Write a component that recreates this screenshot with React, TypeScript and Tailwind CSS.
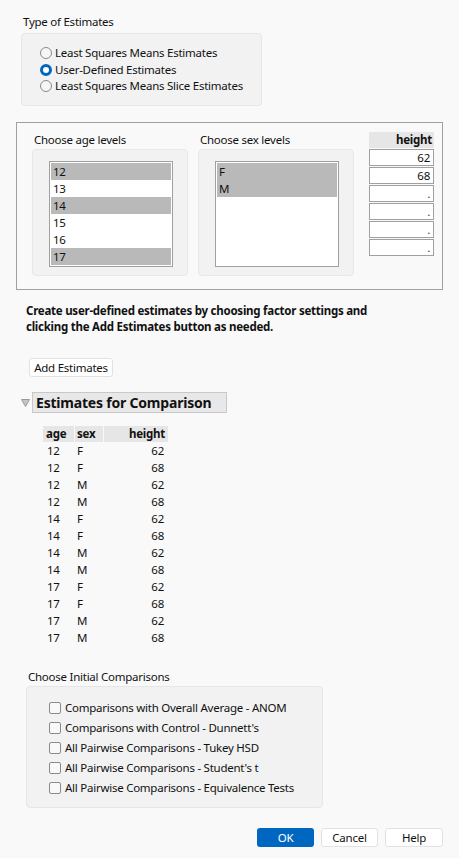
import React from "react";

const ages = ["12", "13", "14", "15", "16", "17"];
const ageSelected = ["12", "14", "17"];

const rows: [string, string, string][] = [
  ["12", "F", "62"],
  ["12", "F", "68"],
  ["12", "M", "62"],
  ["12", "M", "68"],
  ["14", "F", "62"],
  ["14", "F", "68"],
  ["14", "M", "62"],
  ["14", "M", "68"],
  ["17", "F", "62"],
  ["17", "F", "68"],
  ["17", "M", "62"],
  ["17", "M", "68"],
];

const comparisons = [
  "Comparisons with Overall Average - ANOM",
  "Comparisons with Control - Dunnett's",
  "All Pairwise Comparisons - Tukey HSD",
  "All Pairwise Comparisons - Student's t",
  "All Pairwise Comparisons - Equivalence Tests",
];

function Radio({ checked, label }: { checked?: boolean; label: string }) {
  return (
    <div className="flex h-[16.5px] items-center gap-[3px]">
      {checked ? (
        <span className="h-[12px] w-[12px] rounded-full border-[3.5px] border-[#0067c0] bg-white" />
      ) : (
        <span className="h-[12px] w-[12px] rounded-full border border-[#8a8a8a] bg-[#f6f6f6]" />
      )}
      <span>{label}</span>
    </div>
  );
}

function ListBox({ items, selected }: { items: string[]; selected: string[] }) {
  return (
    <div className="ml-[16px] mt-[11px] h-[106px] w-[124px] border border-[#a0a0a0] bg-white p-px">
      {items.map((it) => (
        <div
          key={it}
          className={`h-[17px] pl-[2px] leading-[17px] ${selected.includes(it) ? "bg-[#b9b9b9]" : ""}`}
        >
          {it}
        </div>
      ))}
    </div>
  );
}

export default function App() {
  return (
    <div className="h-[858px] w-[459px] overflow-hidden bg-[#f9f9f9] font-['Noto_Sans',sans-serif] text-[11.5px] leading-[16px] tracking-[-0.25px] text-[#111]">
      <div className="ml-[23px] pt-[14px]">Type of Estimates</div>
      <div className="ml-[21px] mt-[3px] h-[73px] w-[241px] rounded-[4px] border border-[#e6e6e6] bg-[#f2f2f2] pl-[18px] pt-[11px]">
        <Radio label="Least Squares Means Estimates" />
        <Radio checked label="User-Defined Estimates" />
        <Radio label="Least Squares Means Slice Estimates" />
      </div>

      <div className="ml-[16px] mt-[16px] flex h-[168px] w-[427px] border border-[#a0a0a0] pl-[15px] pt-[9px]">
        <div className="w-[156px]">
          <div className="h-[16px] pl-[2px]">Choose age levels</div>
          <div className="mt-px h-[127px] rounded-[4px] border border-[#e8e8e8] bg-[#f2f2f2]">
            <ListBox items={ages} selected={ageSelected} />
          </div>
        </div>
        <div className="ml-[10px] w-[156px]">
          <div className="h-[16px] pl-[2px]">Choose sex levels</div>
          <div className="mt-px h-[127px] rounded-[4px] border border-[#e8e8e8] bg-[#f2f2f2]">
            <ListBox items={["F", "M"]} selected={["F", "M"]} />
          </div>
        </div>
        <div className="ml-[15px] w-[65px]">
          <div className="h-[16px] bg-[#e6e6e6] pr-[2px] text-right font-bold">height</div>
          <div className="mt-px flex flex-col gap-px">
            {["62", "68", ".", ".", ".", "."].map((v, i) => (
              <div
                key={i}
                className={`h-[17px] border border-[#a0a0a0] bg-white pr-[3px] text-right leading-[15px] ${v === "." ? "text-[#2a2ab0]" : ""}`}
              >
                {v}
              </div>
            ))}
          </div>
        </div>
      </div>

      <div className="ml-[26px] mt-[13px] font-bold">
        Create user-defined estimates by choosing factor settings and
        <br />
        clicking the Add Estimates button as needed.
      </div>

      <div className="ml-[29px] mt-[23px] flex h-[19px] w-[84px] items-center justify-center rounded-[3px] border border-[#e2e2e2] bg-white">
        Add Estimates
      </div>

      <div className="mt-[15px] flex items-center pl-[21px]">
        <svg width="9" height="8" viewBox="0 0 9 8">
          <path d="M0.5 0.5 H8.5 L4.5 7.5 Z" fill="#c4c4c4" stroke="#9a9a9a" strokeWidth="1" />
        </svg>
        <div className="ml-[2px] flex h-[21px] w-[195px] items-center border border-[#c8c8c8] bg-[#e8e8e8] pl-[3px] text-[14px] font-bold tracking-[-0.2px]">
          Estimates for Comparison
        </div>
      </div>

      <div className="ml-[43px] mt-[13px] w-[125px]">
        <div className="flex h-[16px] gap-px font-bold">
          <div className="w-[31px] bg-[#e6e6e6] pl-[3px]">age</div>
          <div className="w-[28px] bg-[#e6e6e6] pl-[2px]">sex</div>
          <div className="w-[64px] bg-[#e6e6e6] pr-[3px] text-right">height</div>
        </div>
        {rows.map((r, i) => (
          <div key={i} className="flex h-[17px] gap-px leading-[17px]">
            <div className="w-[31px] pl-[4px]">{r[0]}</div>
            <div className="w-[28px] pl-[2px]">{r[1]}</div>
            <div className="w-[64px] pr-[4px] text-right">{r[2]}</div>
          </div>
        ))}
      </div>

      <div className="ml-[28px] mt-[23px]">Choose Initial Comparisons</div>
      <div className="ml-[26px] mt-px h-[122px] w-[297px] rounded-[4px] border border-[#e6e6e6] bg-[#f2f2f2] pl-[22px] pt-[11px]">
        {comparisons.map((c) => (
          <div key={c} className="flex h-[20px] items-center gap-[4px]">
            <span className="h-[12px] w-[12px] rounded-[2px] border border-[#8a8a8a] bg-[#f8f8f8]" />
            <span>{c}</span>
          </div>
        ))}
      </div>

      <div className="mt-[20px] flex justify-end gap-[7px] pr-[16px]">
        <div className="flex h-[19px] w-[57px] items-center justify-center rounded-[3px] bg-[#0067c0] text-white">
          OK
        </div>
        <div className="flex h-[19px] w-[57px] items-center justify-center rounded-[3px] border border-[#e2e2e2] bg-white">
          Cancel
        </div>
        <div className="flex h-[19px] w-[58px] items-center justify-center rounded-[3px] border border-[#e2e2e2] bg-white">
          Help
        </div>
      </div>
    </div>
  );
}
